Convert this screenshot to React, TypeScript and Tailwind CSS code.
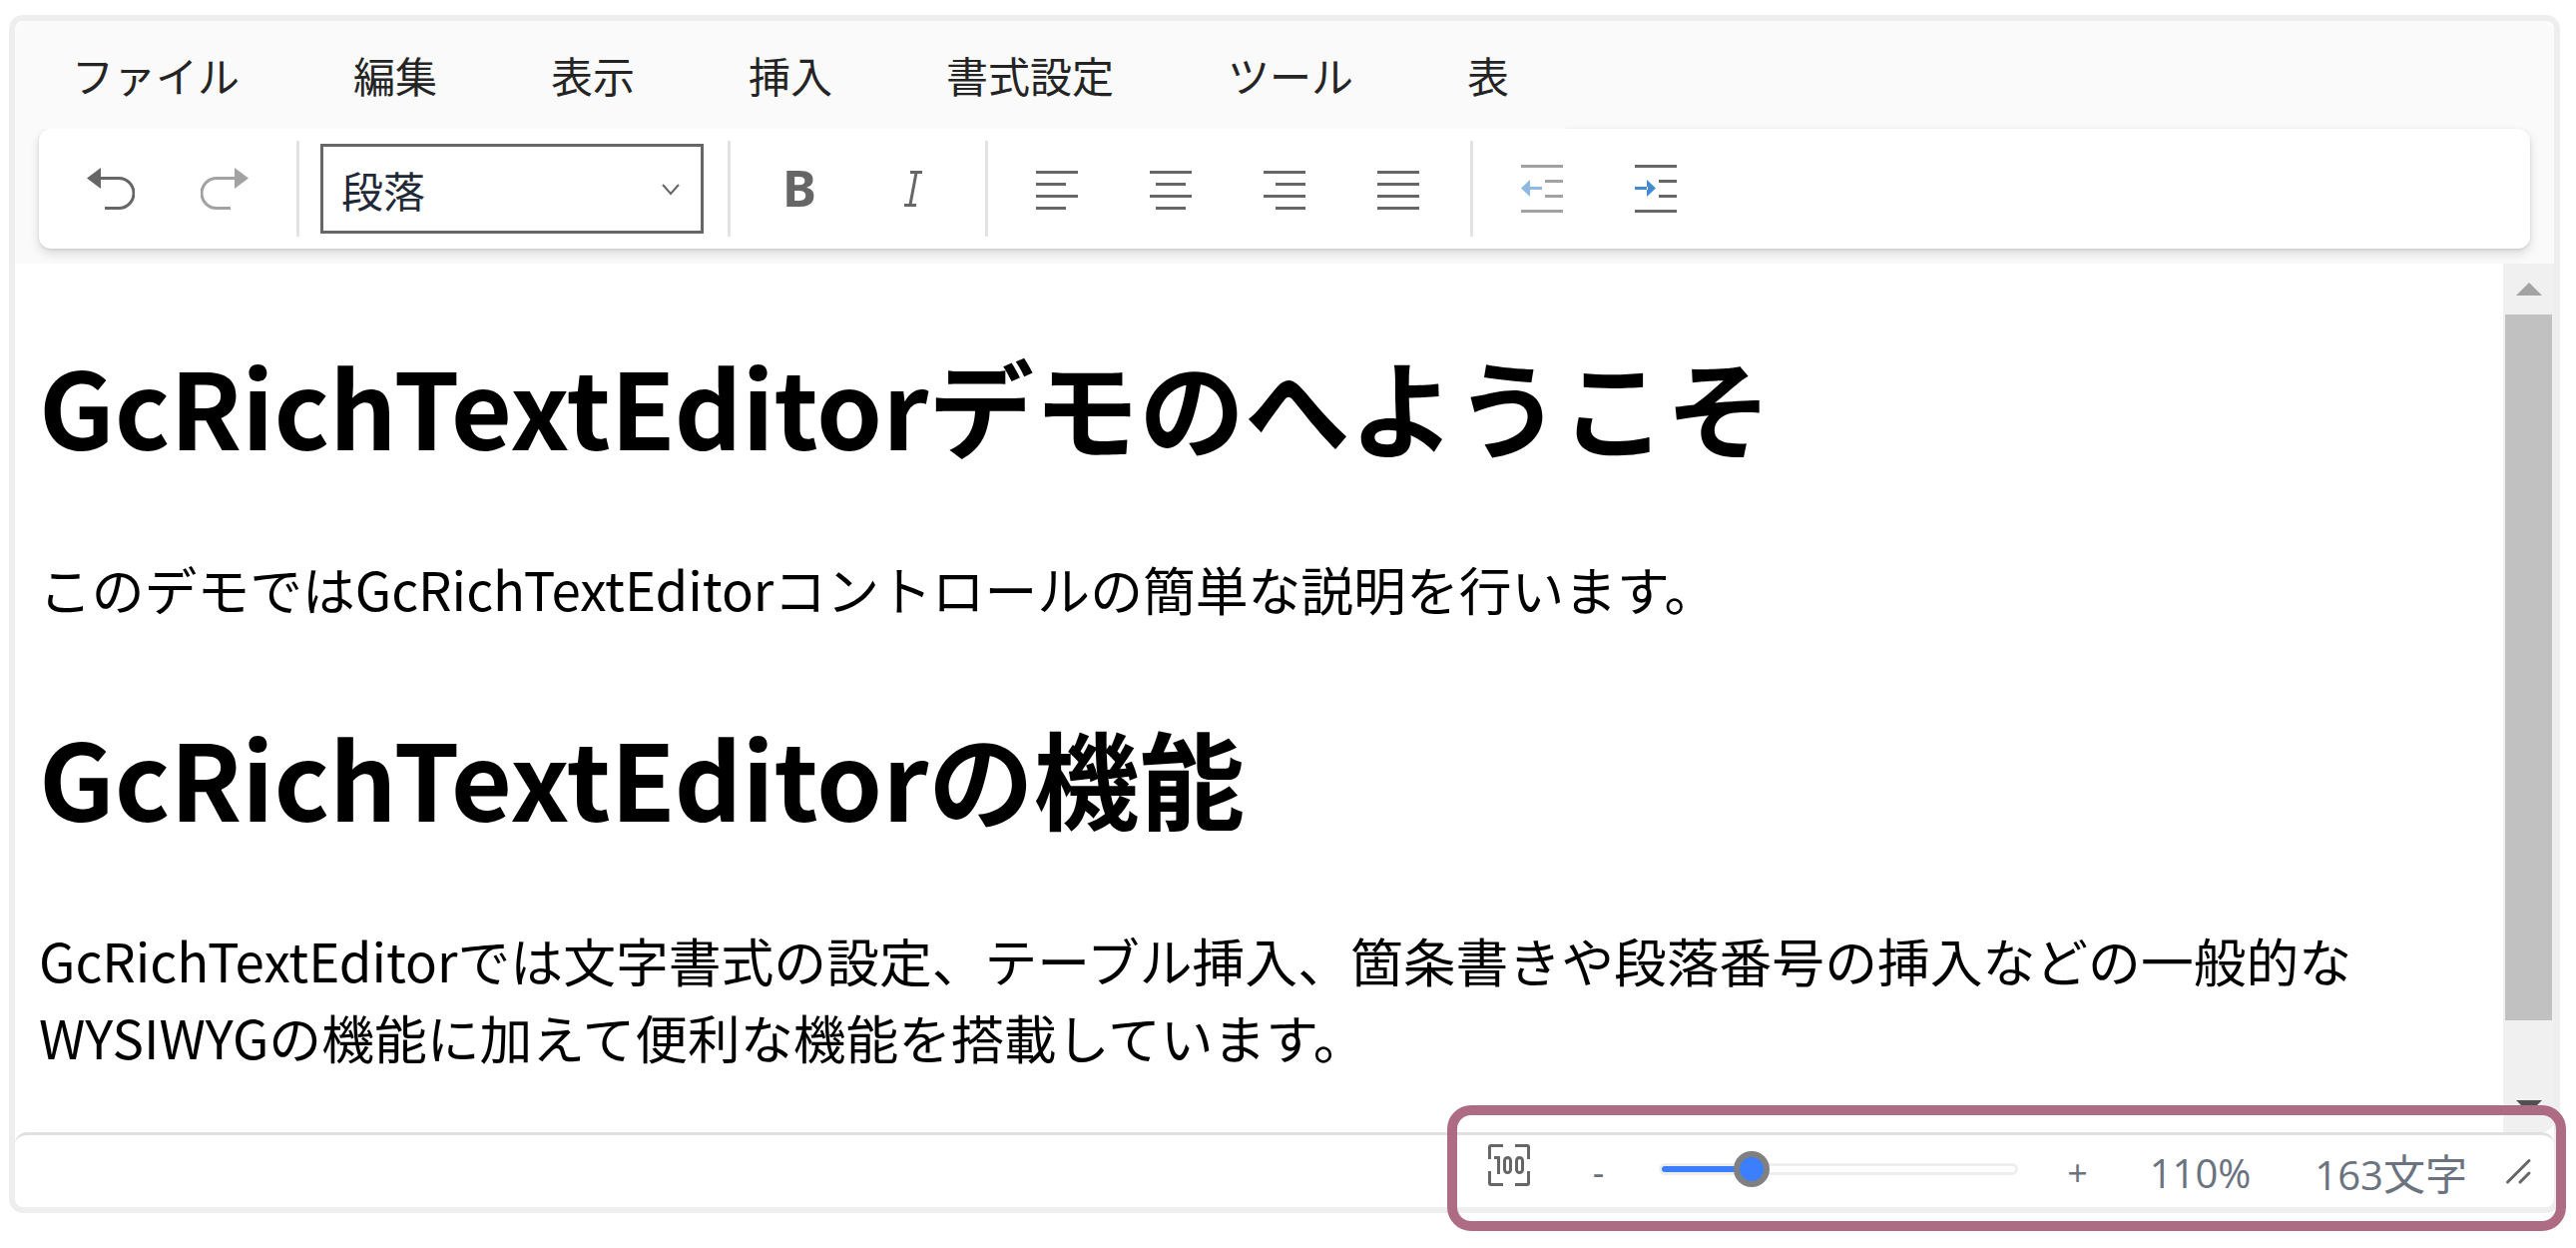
import { useState, type CSSProperties, type ReactNode } from "react";

const MENUS = ["ファイル", "編集", "表示", "挿入", "書式設定", "ツール", "表"];
const MIN_ZOOM = 25;
const MAX_ZOOM = 400;

function Separator() {
  return <div className="ml-[15px] mr-3 h-24 w-[3px] shrink-0 bg-[#e3e3e3]" />;
}

function ToolButton({ label, disabled, children }: { label: string; disabled?: boolean; children: ReactNode }) {
  return (
    <button
      type="button"
      aria-label={label}
      disabled={disabled}
      className="flex h-[90px] w-[114px] shrink-0 items-center justify-center text-[#666] disabled:opacity-60"
    >
      {children}
    </button>
  );
}

function Icon({ children }: { children: ReactNode }) {
  return (
    <svg viewBox="0 0 48 48" className="size-12" fill="none" stroke="currentColor" strokeWidth="3" aria-hidden="true">
      {children}
    </svg>
  );
}

function Toolbar() {
  return (
    <div
      role="toolbar"
      aria-label="書式"
      className="mx-6 flex h-[120px] items-center rounded-xl bg-white pl-[15px] shadow-[0_5px_11px_rgba(0,0,0,0.13),0_1px_3px_rgba(0,0,0,0.11)]"
    >
      <ToolButton label="元に戻す">
        <Icon>
          <path d="M0 13.5 14 3V24Z" fill="currentColor" stroke="none" />
          <path d="M13 13.5H32a15 15 0 0 1 0 30H18" />
        </Icon>
      </ToolButton>
      <ToolButton label="やり直し" disabled>
        <Icon>
          <path d="M48 13.5 34 3V24Z" fill="currentColor" stroke="none" />
          <path d="M35 13.5H16a15 15 0 0 0 0 30H30" />
        </Icon>
      </ToolButton>
      <Separator />
      <div className="relative ml-[9px] mr-[9px] shrink-0">
        <select
          aria-label="段落書式"
          defaultValue="段落"
          className="h-[90px] w-96 appearance-none border-[3px] border-[#666] bg-white pl-[18px] text-[42px] text-[#1f2937]"
        >
          <option>段落</option>
          <option>見出し 1</option>
        </select>
        <svg
          viewBox="0 0 18 12"
          className="pointer-events-none absolute right-6 top-10 h-3 w-[18px]"
          fill="none"
          stroke="#666"
          strokeWidth="2"
          aria-hidden="true"
        >
          <path d="M1 1 9 10 17 1" />
        </svg>
      </div>
      <Separator />
      <ToolButton label="太字">
        <span className="pb-1 font-['Noto_Sans'] text-[51px] font-bold leading-[48px]">B</span>
      </ToolButton>
      <ToolButton label="斜体">
        <Icon>
          <path d="M21 7.5H33M15 40.5H27M27 8 21 40" />
        </Icon>
      </ToolButton>
      <Separator />
      <ToolButton label="左揃え">
        <Icon>
          <path d="M3 7.5H45M3 19.5H33M3 31.5H45M3 43.5H33" />
        </Icon>
      </ToolButton>
      <ToolButton label="中央揃え">
        <Icon>
          <path d="M3 7.5H45M9 19.5H39M3 31.5H45M9 43.5H39" />
        </Icon>
      </ToolButton>
      <ToolButton label="右揃え">
        <Icon>
          <path d="M3 7.5H45M15 19.5H45M3 31.5H45M15 43.5H45" />
        </Icon>
      </ToolButton>
      <ToolButton label="両端揃え">
        <Icon>
          <path d="M3 7.5H45M3 19.5H45M3 31.5H45M3 43.5H45" />
        </Icon>
      </ToolButton>
      <Separator />
      <ToolButton label="インデント解除" disabled>
        <Icon>
          <path d="M3 1.5H45M27 16.5H45M27 31.5H45M3 46.5H45" />
          <path d="M3 23.5 12 15V32ZM11 22H24V25H11Z" fill="#428bd2" stroke="none" />
        </Icon>
      </ToolButton>
      <ToolButton label="インデント">
        <Icon>
          <path d="M3 1.5H45M27 16.5H45M27 31.5H45M3 46.5H45" />
          <path d="M24 23.5 15 15V32ZM3 22H16V25H3Z" fill="#428bd2" stroke="none" />
        </Icon>
      </ToolButton>
    </div>
  );
}

function Scrollbar() {
  return (
    <div className="flex w-[51px] shrink-0 flex-col rounded-br-xl bg-[#f0f0f0]">
      <button type="button" aria-label="上へスクロール" className="flex h-[51px] shrink-0 items-center justify-center">
        <svg viewBox="0 0 26 13" className="h-[13px] w-[26px]" aria-hidden="true">
          <path d="M13 0 26 13H0Z" fill="#a3a3a3" />
        </svg>
      </button>
      <div className="min-h-0 flex-1 px-0.5">
        <div className="h-[92%] bg-[#c1c1c1]" />
      </div>
      <button type="button" aria-label="下へスクロール" className="flex h-[51px] shrink-0 items-center justify-center">
        <svg viewBox="0 0 26 13" className="h-[13px] w-[26px]" aria-hidden="true">
          <path d="M0 0H26L13 13Z" fill="#505050" />
        </svg>
      </button>
    </div>
  );
}

function StatusBar({ zoom, onZoom }: { zoom: number; onZoom: (value: number) => void }) {
  const filled = ((zoom - MIN_ZOOM) / (MAX_ZOOM - MIN_ZOOM)) * 100;
  const step = (delta: number) => onZoom(Math.min(MAX_ZOOM, Math.max(MIN_ZOOM, zoom + delta)));
  const track: CSSProperties = {
    backgroundImage: `linear-gradient(to right, #3b7fff ${filled}%, #fff ${filled}%)`,
  };
  return (
    <footer className="flex h-[75px] shrink-0 justify-end rounded-xl border-t-[3px] border-[#e0e0e0] bg-white">
      <div className="relative flex items-center pl-[38px] pr-[21px] text-[42px] leading-[60px] text-[#6b7280]">
        <button type="button" aria-label="100%に戻す" onClick={() => onZoom(100)} className="mb-3 mr-[42px] text-[#666]">
          <Icon>
            <path d="M18 4.5H6Q4.5 4.5 4.5 6V18M30 4.5H42Q43.5 4.5 43.5 6V18M18 43.5H6Q4.5 43.5 4.5 42V30M30 43.5H42Q43.5 43.5 43.5 42V30" />
            <path d="M9 16.5H13.5V33" />
            <rect x="19.5" y="16.5" width="6" height="15" rx="3" />
            <rect x="31.5" y="16.5" width="6" height="15" rx="3" />
          </Icon>
        </button>
        <button type="button" aria-label="縮小" onClick={() => step(-10)} className="mr-9 w-12 pt-1 font-['Open_Sans'] text-[36px]">
          -
        </button>
        <input
          type="range"
          aria-label="ズーム"
          min={MIN_ZOOM}
          max={MAX_ZOOM}
          value={zoom}
          onChange={(e) => onZoom(Number(e.target.value))}
          style={track}
          className="mb-1 h-3 w-[360px] appearance-none rounded-full border-[3px] border-[#eee] bg-origin-padding [&::-webkit-slider-runnable-track]:h-1.5 [&::-webkit-slider-thumb]:-mt-[15px] [&::-webkit-slider-thumb]:size-9 [&::-webkit-slider-thumb]:appearance-none [&::-webkit-slider-thumb]:rounded-full [&::-webkit-slider-thumb]:border-[6px] [&::-webkit-slider-thumb]:border-[#808080] [&::-webkit-slider-thumb]:bg-[#3b7fff]"
        />
        <button type="button" aria-label="拡大" onClick={() => step(10)} className="ml-9 mr-12 w-12 pt-1 font-['Open_Sans'] text-[36px]">
          +
        </button>
        <output className="mr-16 pt-1 font-['Open_Sans'] text-[40px]">{zoom}%</output>
        <span className="mr-9 flex items-baseline pt-1">
          <span className="font-['Open_Sans'] text-[40px]">163</span>文字
        </span>
        <svg viewBox="0 0 30 30" className="size-[30px]" fill="none" stroke="#666" strokeWidth="3" strokeLinecap="round" aria-hidden="true">
          <path d="M4.5 26 26 4.5M17 26 26 17" />
        </svg>
        <div className="pointer-events-none absolute -bottom-6 -right-3 -top-[30px] left-0 rounded-3xl border-[10px] border-[#ad6c84]" />
      </div>
    </footer>
  );
}

export default function App() {
  const [zoom, setZoom] = useState(110);
  return (
    <div className="h-screen bg-white pb-[35px] pl-[9px] pr-4 pt-[15px] font-['Noto_Sans_CJK_JP',sans-serif]">
      <div className="flex h-full flex-col rounded-[14px] border-[6px] border-[#eee] bg-white">
        <header className="shrink-0 overflow-hidden rounded-t-xl bg-[#fafafa] pb-[15px]">
          <nav aria-label="メニュー" className="relative z-10 flex h-[108px] w-fit bg-[#fafafa]">
            {MENUS.map((name) => (
              <button key={name} type="button" className="px-[57px] text-[42px] leading-[60px] text-[#242424]">
                {name}
              </button>
            ))}
          </nav>
          <Toolbar />
        </header>
        <div className="flex min-h-0 flex-1">
          <main
            contentEditable
            suppressContentEditableWarning
            spellCheck={false}
            className="min-w-0 flex-1 overflow-y-auto px-6 text-black outline-none [scrollbar-width:none]"
          >
            <div className="flow-root" style={{ zoom: zoom / 100 }}>
              <h1 className="mb-16 mt-[59px] text-[96px] font-bold leading-[normal]">GcRichTextEditorデモのへようこそ</h1>
              <p className="mb-[66px] text-[48px] leading-[70px]">このデモではGcRichTextEditorコントロールの簡単な説明を行います。</p>
              <h1 className="mb-16 mt-[59px] text-[96px] font-bold leading-[normal]">GcRichTextEditorの機能</h1>
              <p className="mb-[66px] text-[48px] leading-[70px]">
                GcRichTextEditorでは文字書式の設定、テーブル挿入、箇条書きや段落番号の挿入などの一般的なWYSIWYGの機能に加えて便利な機能を搭載しています。
              </p>
            </div>
          </main>
          <Scrollbar />
        </div>
        <StatusBar zoom={zoom} onZoom={setZoom} />
      </div>
    </div>
  );
}
